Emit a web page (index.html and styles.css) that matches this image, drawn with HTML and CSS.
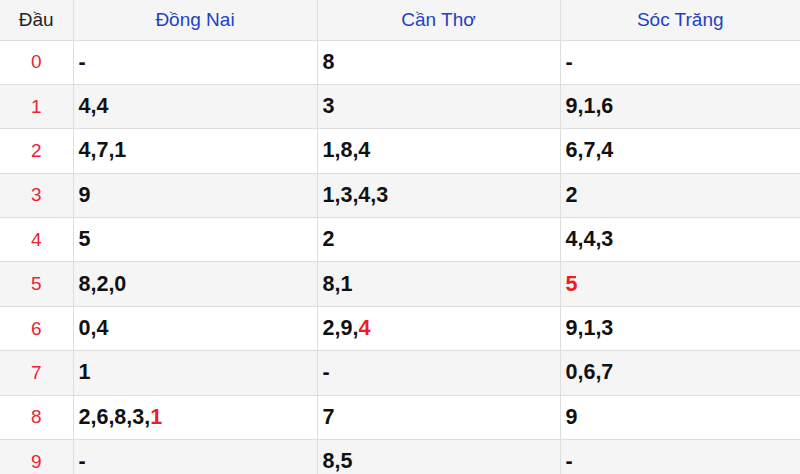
FILE: index.html
```html
<!DOCTYPE html>
<html lang="vi">
<head>
<meta charset="utf-8">
<title>Đầu loto</title>
<link rel="stylesheet" href="styles.css">
</head>
<body>
<table class="loto">
  <colgroup>
    <col class="c-head">
    <col class="c-a">
    <col class="c-b">
    <col class="c-c">
  </colgroup>
  <thead>
    <tr><th class="dau">Đầu</th><th>Đồng Nai</th><th>Cần Thơ</th><th>Sóc Trăng</th></tr>
  </thead>
  <tbody>
    <tr><td class="idx">0</td><td>-</td><td>8</td><td>-</td></tr>
    <tr><td class="idx">1</td><td>4,4</td><td>3</td><td>9,1,6</td></tr>
    <tr><td class="idx">2</td><td>4,7,1</td><td>1,8,4</td><td>6,7,4</td></tr>
    <tr><td class="idx">3</td><td>9</td><td>1,3,4,3</td><td>2</td></tr>
    <tr><td class="idx">4</td><td>5</td><td>2</td><td>4,4,3</td></tr>
    <tr><td class="idx">5</td><td>8,2,0</td><td>8,1</td><td><span class="hl">5</span></td></tr>
    <tr><td class="idx">6</td><td>0,4</td><td>2,9,<span class="hl">4</span></td><td>9,1,3</td></tr>
    <tr><td class="idx">7</td><td>1</td><td>-</td><td>0,6,7</td></tr>
    <tr><td class="idx">8</td><td>2,6,8,3,<span class="hl">1</span></td><td>7</td><td>9</td></tr>
    <tr><td class="idx">9</td><td>-</td><td>8,5</td><td>-</td></tr>
  </tbody>
</table>
</body>
</html>
```
FILE: styles.css
```css
html, body {
  margin: 0;
  padding: 0;
  background: #ffffff;
}
body {
  font-family: "Liberation Sans", Arial, sans-serif;
  overflow: hidden;
}
.loto {
  border-collapse: collapse;
  table-layout: fixed;
  width: 800px;
}
.c-head { width: 73px; }
.c-a { width: 244px; }
.c-b { width: 243px; }
.c-c { width: 240px; }

.loto th,
.loto td {
  border: 1px solid #dedede;
  padding: 0 0 0 5px;
  vertical-align: middle;
}
.loto tr > :first-child { border-left: none; }
.loto tr > :last-child { border-right: none; }
.loto thead th { border-top: none; }

.loto thead tr {
  height: 40px;
  background: #f5f5f5;
}
.loto th {
  font-weight: normal;
  font-size: 19px;
  color: #1d42c4;
  text-align: center;
  padding: 0;
}
.loto th.dau {
  color: #222222;
}
.loto tbody tr {
  height: 44.4px;
}
.loto tbody tr:nth-child(even) {
  background: #f5f5f5;
}
.loto td {
  font-size: 21.5px;
  font-weight: bold;
  color: #111111;
}
.loto td.idx {
  font-weight: normal;
  font-size: 19px;
  color: #ee2233;
  text-align: center;
  padding: 0;
}
.hl {
  color: #ee1c25;
}
```
